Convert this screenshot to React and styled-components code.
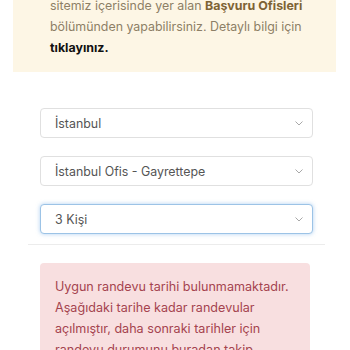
import React from 'react';
import styled, { createGlobalStyle } from 'styled-components';

const GlobalStyle = createGlobalStyle`
  html, body {
    margin: 0;
    padding: 0;
    background: #ffffff;
    font-family: Inter, "Noto Sans", sans-serif;
    overflow: hidden;
  }
`;

const Page = styled.div`
  width: 350px;
  height: 350px;
  overflow: hidden;
`;

const Notice = styled.div`
  margin: -5px 14px 0 13px;
  padding: 0 10px 14px 37px;
  background: #fdf6e5;
  color: #8d7f66;
  font-size: 12.4px;
  line-height: 21px;
`;

const Line = styled.div`
  white-space: nowrap;
`;

const Strong = styled.b`
  font-weight: 700;
  color: ${(p) => (p.$dark ? '#111111' : '#7e6334')};
`;

const Form = styled.div`
  margin: 36px 25px 0 28px;
  padding: 0 12px 10px;
  border-bottom: 1px solid #ececec;
  display: flex;
  flex-direction: column;
  gap: 18px;
`;

const Select = styled.div`
  height: 30px;
  box-sizing: border-box;
  display: flex;
  align-items: center;
  justify-content: space-between;
  padding: 0 9px 0 14px;
  border: 1px solid ${(p) => (p.$focus ? '#9cc3e6' : '#e0e0e0')};
  border-radius: 4px;
  box-shadow: ${(p) => (p.$focus ? '0 0 4px rgba(110, 170, 230, 0.55)' : 'none')};
  background: #fff;
  color: #555555;
  font-size: 12.4px;
`;

const Chevron = () => (
  <svg width="8" height="5" viewBox="0 0 8 5" fill="none">
    <path d="M0.5 0.5 L4 4 L7.5 0.5" stroke="#a8a8a8" strokeWidth="1" />
  </svg>
);

const Alert = styled.div`
  margin: 18px 40px 0 40px;
  padding: 13px 15px;
  background: #f8dfe0;
  border-radius: 4px;
  color: #a5444f;
  font-size: 12.6px;
  line-height: 21px;
`;

export default function App() {
  return (
    <Page>
      <GlobalStyle />
      <Notice>
        <Line>
          sitemiz içerisinde yer alan <Strong>Başvuru Ofisleri</Strong>
        </Line>
        <Line>bölümünden yapabilirsiniz. Detaylı bilgi için</Line>
        <Line>
          <Strong $dark>tıklayınız.</Strong>
        </Line>
      </Notice>
      <Form>
        <Select>
          <span>İstanbul</span>
          <Chevron />
        </Select>
        <Select>
          <span>İstanbul Ofis - Gayrettepe</span>
          <Chevron />
        </Select>
        <Select $focus>
          <span>3 Kişi</span>
          <Chevron />
        </Select>
      </Form>
      <Alert>
        <Line>Uygun randevu tarihi bulunmamaktadır.</Line>
        <Line>Aşağıdaki tarihe kadar randevular</Line>
        <Line>açılmıştır, daha sonraki tarihler için</Line>
        <Line>randevu durumunu buradan takip</Line>
        <Line>edebilirsiniz.</Line>
      </Alert>
    </Page>
  );
}
